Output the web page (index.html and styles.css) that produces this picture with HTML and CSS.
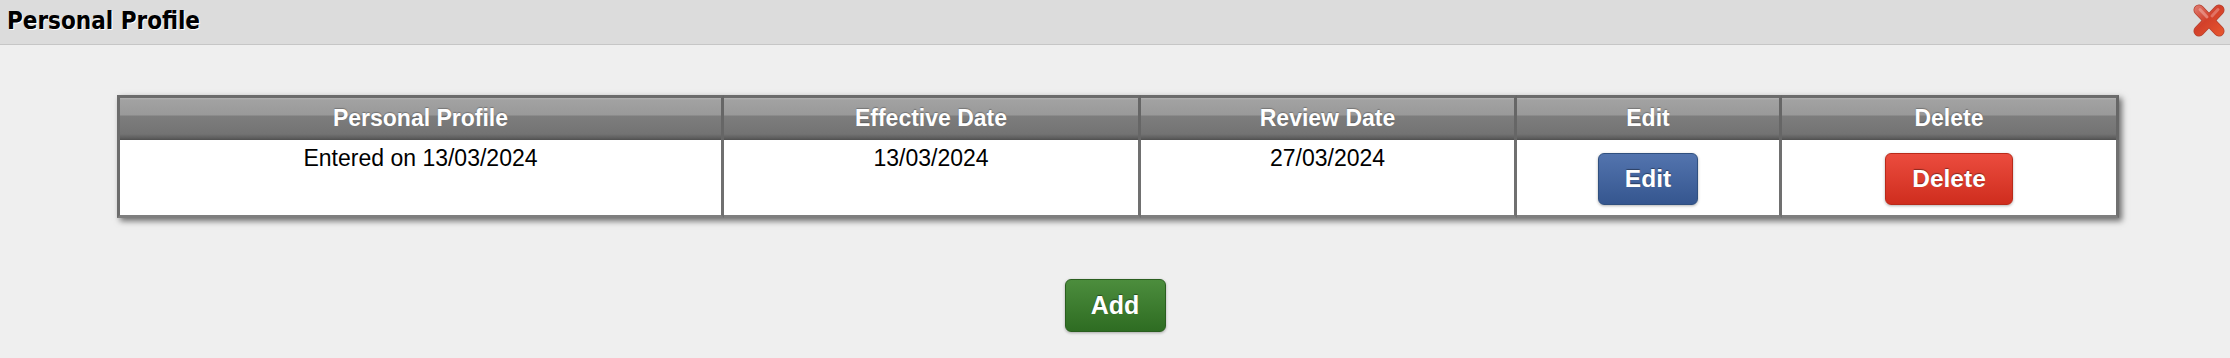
FILE: index.html
```
<!DOCTYPE html>
<html lang="en">
<head>
<meta charset="utf-8">
<title>Personal Profile</title>
<link rel="stylesheet" href="styles.css">
</head>
<body>
<div class="dialog">
  <div class="titlebar">
    <span class="title">Personal Profile</span>
    <button class="close" type="button" aria-label="Close">
      <svg width="32" height="33" viewBox="0 0 32 33">
        <defs>
          <linearGradient id="xg" x1="0" y1="0" x2="32" y2="33" gradientUnits="userSpaceOnUse">
            <stop offset="0" stop-color="#e0837a"/>
            <stop offset="0.45" stop-color="#d2402a"/>
            <stop offset="1" stop-color="#ea5a30"/>
          </linearGradient>
        </defs>
        <g stroke-linecap="round" fill="none">
          <line x1="6" y1="6" x2="26" y2="27" stroke="#b5402e" stroke-width="11"/>
          <line x1="26" y1="6" x2="6" y2="27" stroke="#b5402e" stroke-width="11"/>
          <line x1="6" y1="6" x2="26" y2="27" stroke="url(#xg)" stroke-width="9.5"/>
          <line x1="26" y1="6" x2="6" y2="27" stroke="url(#xg)" stroke-width="9.5"/>
          <line x1="7" y1="5.5" x2="14" y2="13" stroke="#f3b0a8" stroke-opacity="0.55" stroke-width="3"/>
          <line x1="25" y1="5.5" x2="19" y2="12" stroke="#f3b0a8" stroke-opacity="0.45" stroke-width="3"/>
        </g>
      </svg>
    </button>
  </div>
  <div class="content">
    <table class="grid">
      <thead>
        <tr>
          <th class="c1">Personal Profile</th>
          <th class="c2">Effective Date</th>
          <th class="c3">Review Date</th>
          <th class="c4">Edit</th>
          <th class="c5">Delete</th>
        </tr>
      </thead>
      <tbody>
        <tr>
          <td>Entered on 13/03/2024</td>
          <td>13/03/2024</td>
          <td>27/03/2024</td>
          <td><button class="btn btn-edit" type="button">Edit</button></td>
          <td><button class="btn btn-delete" type="button">Delete</button></td>
        </tr>
      </tbody>
    </table>
    <div class="actions">
      <button class="btn btn-add" type="button">Add</button>
    </div>
  </div>
</div>
</body>
</html>
```
FILE: styles.css
```
html, body {
  margin: 0;
  padding: 0;
  height: 100%;
  background: #efefef;
}

.dialog {
  min-height: 100%;
  background: #efefef;
}

.titlebar {
  display: flex;
  justify-content: space-between;
  align-items: flex-start;
  height: 45px;
  box-sizing: border-box;
  background: #dcdcdc;
  border-bottom: 1px solid #c6c6c6;
  padding: 0 5px 0 7px;
}

.title {
  font-family: "DejaVu Sans Condensed", "DejaVu Sans", sans-serif;
  font-stretch: semi-condensed;
  font-weight: bold;
  font-size: 24px;
  line-height: 28px;
  padding-top: 7px;
  color: #000;
  text-shadow: 1px 1px 0 #fff;
}

.close {
  margin-top: 4px;
  padding: 0;
  border: 0;
  background: none;
  width: 32px;
  height: 33px;
  cursor: pointer;
}

.close svg {
  display: block;
}

.content {
  padding-top: 50px;
}

.grid {
  border-collapse: separate;
  border-spacing: 0;
  table-layout: fixed;
  width: 2002px;
  margin-left: 117px;
  box-shadow: 3px 3px 6px rgba(0, 0, 0, 0.55);
  font-family: "Liberation Sans", Arial, sans-serif;
  font-size: 23px;
  background: #fff;
}

.grid th,
.grid td {
  box-sizing: border-box;
  border-right: 3px solid #707070;
  text-align: center;
  line-height: 26px;
}

.grid th:first-child,
.grid td:first-child {
  border-left: 3px solid #6c6c6c;
}

.grid th {
  border-top: 3px solid #6c6c6c;
  border-right-color: #666;
  padding: 7px 4px 9px;
  color: #fff;
  font-weight: bold;
  text-shadow: 0 -1px 1px rgba(0, 0, 0, 0.25);
  background: linear-gradient(to bottom,
    #b3b3b3 0px, #a2a2a2 2px, #999 17px,
    #7d7d7d 18px, #737373 36px, #5e5e5e 40px, #4f4f4f 42px);
}

.grid .c1 { width: 607px; }
.grid .c2 { width: 417px; }
.grid .c3 { width: 376px; }
.grid .c4 { width: 265px; }
.grid .c5 { width: 337px; }

.grid td {
  vertical-align: top;
  padding: 5px 4px;
  color: #000;
  background: #fff;
  border-bottom: 3px solid #7e7e7e;
}

.btn {
  display: block;
  margin: 8px auto 5px;
  height: 52px;
  padding: 0;
  border-radius: 6px;
  border: 1px solid transparent;
  color: #fff;
  font-family: "Liberation Sans", Arial, sans-serif;
  font-weight: bold;
  font-size: 24.5px;
  text-shadow: 0 -1px 1px rgba(0, 0, 0, 0.4);
  box-shadow: 0 1px 3px rgba(0, 0, 0, 0.3);
  cursor: pointer;
}

.btn-edit {
  width: 100px;
  background: linear-gradient(to bottom, #5374ae, #35568f);
  border-color: #30507f;
}

.btn-delete {
  width: 128px;
  background: linear-gradient(to bottom, #eb4c3e, #cf2d1e);
  border-color: #b92a1a;
}

.actions {
  display: flex;
  justify-content: center;
  padding-top: 61px;
}

.btn-add {
  margin: 0;
  width: 101px;
  height: 53px;
  font-size: 25px;
  background: linear-gradient(to bottom, #4c8d3d, #2e6c22);
  border-color: #2a5e1f;
}
```
